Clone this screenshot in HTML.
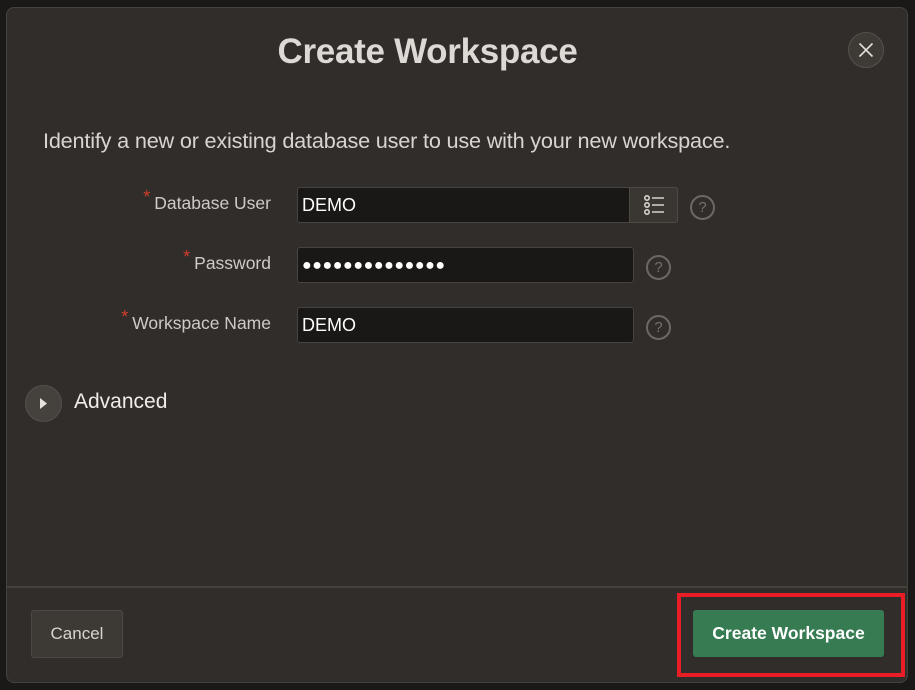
<!DOCTYPE html>
<html><head><style>
*{margin:0;padding:0;box-sizing:border-box}
body{width:915px;height:690px;background:#1b1918;font-family:"Liberation Sans",sans-serif;position:relative;overflow:hidden;color:#e6e3df}
.dlg{position:absolute;left:6px;top:7px;width:902px;height:676px;background:#312d2a;border:1px solid #45413d;border-radius:8px}
.abs{position:absolute}
.title{left:0;width:841px;text-align:center;top:24px;font-size:35px;font-weight:bold;color:#ddd9d4;letter-spacing:-0.3px}
.close{left:841px;top:24px;width:36px;height:36px;border-radius:50%;background:#3e3a36;border:1px solid #56514c}
.intro{left:36px;top:120px;font-size:21.7px;color:#d8d4cf;letter-spacing:-0.2px}
.lbl{font-size:17.5px;color:#cfcac5;text-align:right;right:636px}
.star{color:#d13e2c;font-size:18px;position:relative;top:-6px;margin-right:4px}
.inp{background:#1a1816;border:1px solid #48433f;border-radius:3px;height:36px;font-size:18px;color:#fff;padding:8px 4px;line-height:18px}
.help{width:25px;height:25px;border:2px solid #6d6863;border-radius:50%;color:#77716b;font-size:15px;text-align:center;line-height:21px}
</style></head><body>
<div class="dlg">
<div class="abs title">Create Workspace</div>
<div class="abs close"><svg width="34" height="34" viewBox="0 0 34 34"><path d="M10.5 10.5L23.5 23.5M23.5 10.5L10.5 23.5" stroke="#e0dcd7" stroke-width="1.6"/></svg></div>
<div class="abs intro">Identify a new or existing database user to use with your new workspace.</div>

<div class="abs lbl" style="top:185px"><span class="star">*</span>Database User</div>
<div class="abs inp" style="left:290px;top:179px;width:381px;border-radius:3px">DEMO</div>
<div class="abs" style="left:622px;top:179px;width:49px;height:36px;background:#3a3632;border:1px solid #4e4945;border-radius:0 3px 3px 0">
<svg width="48" height="34" viewBox="0 0 48 34"><g fill="none" stroke="#d6d2cd" stroke-width="1.6"><circle cx="17" cy="10" r="2.2"/><circle cx="17" cy="17" r="2.2"/><circle cx="17" cy="24" r="2.2"/><path d="M22 10H34M22 17H34M22 24H34"/></g></svg></div>
<div class="abs help" style="left:683px;top:187px">?</div>

<div class="abs lbl" style="top:245px"><span class="star">*</span>Password</div>
<div class="abs inp" style="left:290px;top:239px;width:337px;font-size:16px;letter-spacing:0.6px;padding-top:9px">●●●●●●●●●●●●●●</div>
<div class="abs help" style="left:639px;top:247px">?</div>

<div class="abs lbl" style="top:305px"><span class="star">*</span>Workspace Name</div>
<div class="abs inp" style="left:290px;top:299px;width:337px">DEMO</div>
<div class="abs help" style="left:639px;top:307px">?</div>

<div class="abs" style="left:18px;top:377px;width:37px;height:37px;border-radius:50%;background:#45413d;border:1px solid #55504b">
<svg width="35" height="35" viewBox="0 0 35 35"><path d="M14 12L21 17.5L14 23Z" fill="#e6e3df"/></svg></div>
<div class="abs" style="left:67px;top:382px;font-size:21px;color:#f0ede9">Advanced</div>

<div class="abs" style="left:0;top:578px;width:900px;height:2px;background:#45413d"></div>
<div class="abs" style="left:24px;top:602px;width:92px;height:48px;background:#3d3935;border:1px solid #4e4945;border-radius:3px;font-size:17px;color:#d8d4cf;text-align:center;line-height:46px">Cancel</div>
<div class="abs" style="left:686px;top:602px;width:191px;height:47px;background:#367b52;border-radius:3px;font-size:17.5px;font-weight:bold;color:#fff;text-align:center;line-height:47px">Create Workspace</div>
</div>
<div class="abs" style="left:677px;top:593px;width:228px;height:84px;border:4px solid #e81d25"></div>
</body></html>
